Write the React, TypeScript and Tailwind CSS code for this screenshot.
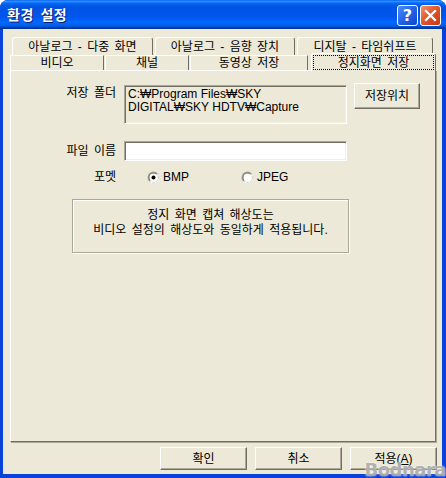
import React from "react";

function Radio({ checked }: { checked: boolean }) {
  return (
    <svg width="13" height="13" viewBox="0 0 13 13" className="shrink-0">
      <circle cx="6.5" cy="6.5" r="6" fill="#ACA899" />
      <path d="M12.5 6.5 A6 6 0 0 1 2.26 10.74 L10.74 2.26 A6 6 0 0 1 12.5 6.5Z" fill="#FFFFFF" />
      <circle cx="6.5" cy="6.5" r="5" fill="#716F64" />
      <path d="M11.5 6.5 A5 5 0 0 1 2.96 10.04 L10.04 2.96 A5 5 0 0 1 11.5 6.5Z" fill="#F1EFE2" />
      <circle cx="6.5" cy="6.5" r="4" fill="#FFFFFF" />
      {checked && <circle cx="6.5" cy="6.5" r="2" fill="#000000" />}
    </svg>
  );
}

const btn =
  "flex items-center justify-center bg-[#ECE9D8] border-t border-l border-t-white border-l-white border-r border-b border-r-[#716F64] border-b-[#716F64] shadow-[inset_-1px_-1px_0_#ACA899] text-[12px] leading-[14px] text-black";

const sunken =
  "border border-t-[#ACA899] border-l-[#ACA899] border-r-white border-b-white shadow-[inset_1px_1px_0_#716F64,inset_-1px_-1px_0_#F1EFE2]";

const tab =
  "flex items-center justify-center bg-[#ECE9D8] border-t border-l border-r border-t-white border-l-white border-r-[#716F64] rounded-t-[3px] text-[12px] leading-[14px] text-black whitespace-nowrap [word-spacing:2px]";

export default function App() {
  return (
    <div className="w-[446px] h-[478px] bg-white font-['Liberation_Sans','Noto_Sans_CJK_KR',sans-serif] relative overflow-hidden">
      <div className="w-[446px] h-[478px] flex flex-col bg-[#0842D8] rounded-t-[8px] overflow-hidden">
        {/* Title bar */}
        <div className="h-[29px] flex items-center pl-[7px] pr-[5px] bg-[linear-gradient(to_bottom,#0058EE_0%,#3593FF_4%,#288EFF_6%,#127DFF_8%,#036FFC_10%,#0262EE_14%,#0057E5_20%,#0054E3_24%,#0055EB_56%,#005BF5_66%,#026AFE_76%,#0062EF_86%,#0052D6_92%,#0040AB_94%,#003092_100%)]">
          <span className="text-white font-bold text-[14px] leading-[16px] mt-[-1px] [word-spacing:3px] tracking-[0.5px] [text-shadow:1px_1px_0_#0A1E6A] font-['Noto_Sans_CJK_KR',sans-serif]">
            환경 설정
          </span>
          <div className="ml-auto flex gap-[2px] mt-[2px]">
            <div className="w-[21px] h-[21px] rounded-[3px] border border-white bg-[linear-gradient(135deg,#4F8CF7_0%,#2463E8_50%,#0D45CE_100%)] flex items-center justify-center">
              <span className="text-white font-bold text-[16px] leading-[16px] font-['DejaVu_Sans',sans-serif]">?</span>
            </div>
            <div className="w-[21px] h-[21px] rounded-[3px] border border-white bg-[linear-gradient(135deg,#F0926E_0%,#E2582F_45%,#C23A14_100%)] flex items-center justify-center">
              <svg width="13" height="13" viewBox="0 0 13 13">
                <path d="M2 2 L11 11 M11 2 L2 11" stroke="#FFFFFF" strokeWidth="2.2" strokeLinecap="square" />
              </svg>
            </div>
          </div>
        </div>

        {/* Body */}
        <div className="ml-[3px] mr-[4px] mb-[4px] flex-1 bg-[#ECE9D8] flex flex-col pt-[8px]">
          {/* Tab row 1 */}
          <div className="flex h-[18px] ml-[9px] gap-[2px]">
            <div className={`${tab} w-[141px] h-[18px]`}>아날로그 - 다중 화면</div>
            <div className={`${tab} w-[140px] h-[18px]`}>아날로그 - 음향 장치</div>
            <div className={`${tab} w-[136px] h-[18px]`}>디지탈 - 타임쉬프트</div>
          </div>
          {/* Tab row 2 */}
          <div className="flex h-[15px] ml-[7px] items-start">
            <div className={`${tab} w-[94px] h-[15px] rounded-t-none`}>비디오</div>
            <div className={`${tab} w-[84px] h-[15px] ml-[1px] rounded-t-none`}>채널</div>
            <div className={`${tab} w-[118px] h-[15px] ml-[1px] rounded-t-none`}>동영상 저장</div>
            <div className={`${tab} w-[125px] h-[18px] ml-[3px] mt-[-2px] relative z-10 p-[1px]`}>
              <div className="w-full h-full border border-dotted border-black flex items-center justify-center">
                정지화면 저장
              </div>
            </div>
          </div>

          {/* Panel */}
          <div className="ml-[7px] w-[426px] h-[372px] border-t border-l border-t-white border-l-white border-r border-b border-r-[#716F64] border-b-[#716F64] shadow-[1px_1px_0_#ACA899] flex flex-col pt-[12px] text-[12px] leading-[14px] text-black [word-spacing:2px]">
            {/* Folder row */}
            <div className="flex items-start pl-[45px]">
              <div className="w-[60px] text-right mt-[3px] whitespace-nowrap">저장 폴더</div>
              <div className={`${sunken} ml-[8px] mt-[2px] w-[223px] h-[39px] bg-[#ECE9D8] px-[3px] pt-[2px] leading-[13px] [word-spacing:0px]`}>
                <div>C:₩Program Files₩SKY</div>
                <div>DIGITAL₩SKY HDTV₩Capture</div>
              </div>
              <div className={`${btn} ml-[7px] w-[66px] h-[26px]`}>저장위치</div>
            </div>

            {/* File name row */}
            <div className="flex items-center pl-[45px] mt-[17px]">
              <div className="w-[60px] text-right whitespace-nowrap">파일 이름</div>
              <div className={`${sunken} ml-[8px] w-[223px] h-[20px] bg-white`} />
            </div>

            {/* Format row */}
            <div className="flex items-center pl-[45px] mt-[9px] h-[14px]">
              <div className="w-[60px] text-right whitespace-nowrap">포멧</div>
              <div className="ml-[31px] w-[94px] flex items-center gap-[3px]">
                <Radio checked={true} />
                <span>BMP</span>
              </div>
              <div className="flex items-center gap-[3px]">
                <Radio checked={false} />
                <span>JPEG</span>
              </div>
            </div>

            {/* Info group */}
            <div className="ml-[61px] mt-[15px] w-[277px] h-[54px] border border-[#ACA899] shadow-[inset_1px_1px_0_#FFFFFF,1px_1px_0_#FFFFFF] flex flex-col items-center pt-[8px] leading-[15px]">
              <div>정지 화면 캡쳐 해상도는</div>
              <div>비디오 설정의 해상도와 동일하게 적용됩니다.</div>
            </div>
          </div>

          {/* Bottom buttons */}
          <div className="flex ml-[157px] mt-[5px] gap-[8px]">
            <div className={`${btn} w-[87px] h-[23px]`}>확인</div>
            <div className={`${btn} w-[87px] h-[23px]`}>취소</div>
            <div className={`${btn} w-[87px] h-[23px]`}>적용(<span className="underline">A</span>)</div>
          </div>
        </div>
      </div>
      {/* watermark */}
      <div className="absolute right-[0px] bottom-[-2px] text-[18px] font-bold leading-[20px] text-[#9C9C9C]/80 [text-shadow:0_0_2px_#FFFFFF] font-['DejaVu_Sans',sans-serif] tracking-[-0.5px]">
        Bodnara
      </div>
    </div>
  );
}
